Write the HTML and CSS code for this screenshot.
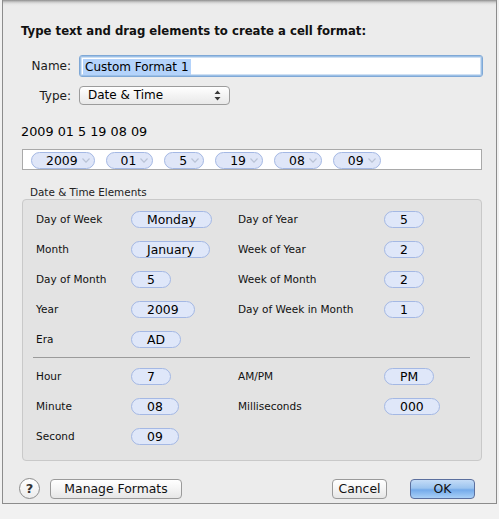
FILE: index.html
```html
<!DOCTYPE html>
<html>
<head>
<meta charset="utf-8">
<link rel="stylesheet" href="styles.css">
</head>
<body>
<div class="sheet">
  <div class="title">Type text and drag elements to create a cell format:</div>
  <div class="form-row name-row">
    <span class="form-label">Name:</span>
    <div class="text-input"><span class="sel">Custom Format 1</span></div>
  </div>
  <div class="form-row type-row">
    <span class="form-label">Type:</span>
    <div class="popup"><span class="popup-text">Date &amp; Time</span>
      <svg class="updown" width="7" height="11" viewBox="0 0 7 11"><path d="M0.5 4 L3.5 0.5 L6.5 4 Z M0.5 7 L3.5 10.5 L6.5 7 Z" fill="#3a3a3a"/></svg>
    </div>
  </div>
  <div class="preview">2009 01 5 19 08 09</div>
  <div class="token-field">
    <span class="ftoken">2009<svg class="chev" width="8" height="5" viewBox="0 0 8 5"><polyline points="0.5,0.5 4,4.2 7.5,0.5" fill="none" stroke="#b9c3d6" stroke-width="1.2"/></svg></span>
    <span class="ftoken">01<svg class="chev" width="8" height="5" viewBox="0 0 8 5"><polyline points="0.5,0.5 4,4.2 7.5,0.5" fill="none" stroke="#b9c3d6" stroke-width="1.2"/></svg></span>
    <span class="ftoken">5<svg class="chev" width="8" height="5" viewBox="0 0 8 5"><polyline points="0.5,0.5 4,4.2 7.5,0.5" fill="none" stroke="#b9c3d6" stroke-width="1.2"/></svg></span>
    <span class="ftoken">19<svg class="chev" width="8" height="5" viewBox="0 0 8 5"><polyline points="0.5,0.5 4,4.2 7.5,0.5" fill="none" stroke="#b9c3d6" stroke-width="1.2"/></svg></span>
    <span class="ftoken">08<svg class="chev" width="8" height="5" viewBox="0 0 8 5"><polyline points="0.5,0.5 4,4.2 7.5,0.5" fill="none" stroke="#b9c3d6" stroke-width="1.2"/></svg></span>
    <span class="ftoken">09<svg class="chev" width="8" height="5" viewBox="0 0 8 5"><polyline points="0.5,0.5 4,4.2 7.5,0.5" fill="none" stroke="#b9c3d6" stroke-width="1.2"/></svg></span>
  </div>
  <div class="section-label">Date &amp; Time Elements</div>
  <div class="panel">
    <div class="grid">
      <span class="elabel">Day of Week</span><span class="cell"><span class="token">Monday</span></span>
      <span class="elabel">Day of Year</span><span class="cell"><span class="token">5</span></span>
      <span class="elabel">Month</span><span class="cell"><span class="token">January</span></span>
      <span class="elabel">Week of Year</span><span class="cell"><span class="token">2</span></span>
      <span class="elabel">Day of Month</span><span class="cell"><span class="token">5</span></span>
      <span class="elabel">Week of Month</span><span class="cell"><span class="token">2</span></span>
      <span class="elabel">Year</span><span class="cell"><span class="token">2009</span></span>
      <span class="elabel">Day of Week in Month</span><span class="cell"><span class="token">1</span></span>
      <span class="elabel">Era</span><span class="cell"><span class="token">AD</span></span>
      <span class="elabel"></span><span class="cell"></span>
    </div>
    <div class="sep"></div>
    <div class="grid">
      <span class="elabel">Hour</span><span class="cell"><span class="token">7</span></span>
      <span class="elabel">AM/PM</span><span class="cell"><span class="token">PM</span></span>
      <span class="elabel">Minute</span><span class="cell"><span class="token">08</span></span>
      <span class="elabel">Milliseconds</span><span class="cell"><span class="token">000</span></span>
      <span class="elabel">Second</span><span class="cell"><span class="token">09</span></span>
      <span class="elabel"></span><span class="cell"></span>
    </div>
  </div>
  <div class="footer">
    <button class="help">?</button>
    <button class="btn manage">Manage Formats</button>
    <span class="spacer"></span>
    <button class="btn cancel">Cancel</button>
    <button class="btn ok">OK</button>
  </div>
</div>
</body>
</html>
```

FILE: styles.css
```css
* { box-sizing: border-box; }
html, body { margin: 0; padding: 0; }
body {
  width: 499px;
  height: 519px;
  overflow: hidden;
  background: #f1f1f1;
  font-family: "DejaVu Sans", sans-serif;
  font-size: 12px;
  color: #000;
}
.sheet {
  margin-left: 2px;
  width: 495px;
  height: 504px;
  border: 1px solid #8c8c8c;
  border-top: none;
  background: linear-gradient(#8e8e8e 0px, #c9c9c9 2px, #e6e6e6 4px, #ececec 6px);
  padding-left: 19px;
  display: flex;
  flex-direction: column;
}
.title {
  margin-top: 23px;
  height: 16px;
  line-height: 16px;
  font-weight: bold;
  font-size: 11.7px;
  margin-left: -1px;
  color: #111;
}
.form-row {
  display: flex;
  align-items: center;
}
.form-label {
  width: 50px;
  margin-left: -1px;
  text-align: right;
  margin-right: 8px;
  color: #1a1a1a;
}
.name-row { margin-top: 16px; height: 22px; }
.text-input {
  width: 404px;
  height: 22px;
  background: #fff;
  border: 1px solid #7fa8d6;
  border-radius: 3px;
  box-shadow: inset 0 0 0 1px #9cc0e6, inset 0 0 0 2px #cfe0f3;
  padding: 3px 0 0 3px;
  line-height: 16px;
}
.sel {
  background: #b4d3fb;
  padding: 0 2px;
  display: inline-block;
  height: 16px;
}
.type-row { margin-top: 9px; height: 19px; }
.popup {
  width: 151px;
  height: 19px;
  border: 1px solid #9c9c9c;
  border-radius: 4px;
  background: linear-gradient(#ffffff, #f3f3f3 50%, #e9e9e9);
  display: flex;
  align-items: center;
  justify-content: space-between;
  padding: 0 8px 0 8px;
}
.popup-text { line-height: 17px; }
.updown { display: block; }
.preview {
  margin-top: 19px;
  height: 16px;
  line-height: 16px;
  margin-left: -1px;
  font-size: 12.8px;
}
.token-field {
  margin-top: 9px;
  width: 460px;
  height: 21px;
  background: #fff;
  border: 1px solid #a9a9a9;
  padding: 2px 0 0 8px;
  display: flex;
  gap: 11px;
}
.ftoken {
  height: 17px;
  border: 1px solid #a4b8e4;
  border-radius: 9px;
  background: #dfe6f8;
  display: flex;
  align-items: center;
  padding: 0 4px 0 14px;
  line-height: 15px;
  font-size: 12.4px;
}
.ftoken .chev { margin-left: 4px; margin-top: -1px; }
.section-label {
  margin-top: 15px;
  height: 14px;
  line-height: 14px;
  font-size: 10.4px;
  margin-left: 8px;
  color: #222;
}
.panel {
  width: 460px;
  height: 262px;
  background: #e3e3e3;
  border: 1px solid #c9c9c9;
  border-radius: 4px;
  padding: 4px 0 0 13px;
}
.grid {
  display: grid;
  grid-template-columns: 95px 107px 146px auto;
  grid-auto-rows: 30px;
  align-items: center;
}
.elabel {
  font-size: 10.5px;
  color: #111;
}
.cell { display: flex; }
.token {
  min-width: 40px;
  height: 17px;
  padding: 0 15px;
  border: 1px solid #a4b8e4;
  border-radius: 9px;
  background: #dfe7f9;
  text-align: center;
  line-height: 15px;
  font-size: 12.4px;
}
.sep {
  margin: 3px 0 3px -3px;
  width: 437px;
  height: 1px;
  background: #9b9b9b;
}
.footer {
  margin-top: 17px;
  height: 21px;
  display: flex;
  align-items: center;
  padding-right: 10px;
  width: 466px;
  margin-left: -3px;
}
.help {
  width: 21px;
  height: 21px;
  border-radius: 50%;
  border: 1px solid #8d8d8d;
  background: linear-gradient(#ffffff, #ececec);
  font-family: "DejaVu Sans", sans-serif;
  font-size: 13px;
  font-weight: bold;
  color: #333;
  padding: 0;
  line-height: 19px;
  margin-right: 10px;
}
.btn {
  height: 20px;
  border: 1px solid #9a9a9a;
  border-radius: 4px;
  background: linear-gradient(#ffffff, #f4f4f4 50%, #e6e6e6);
  font-family: "DejaVu Sans", sans-serif;
  font-size: 12.4px;
  color: #111;
  padding: 0;
  line-height: 18px;
}
.manage { width: 132px; }
.spacer { flex: 1; }
.cancel { width: 55px; margin-right: 23px; }
.ok {
  width: 65px;
  border-color: #5b6f9e;
  background: linear-gradient(#c4dcf7, #9cc4ef 45%, #74aaea 55%, #a9d0f7);
}
```
